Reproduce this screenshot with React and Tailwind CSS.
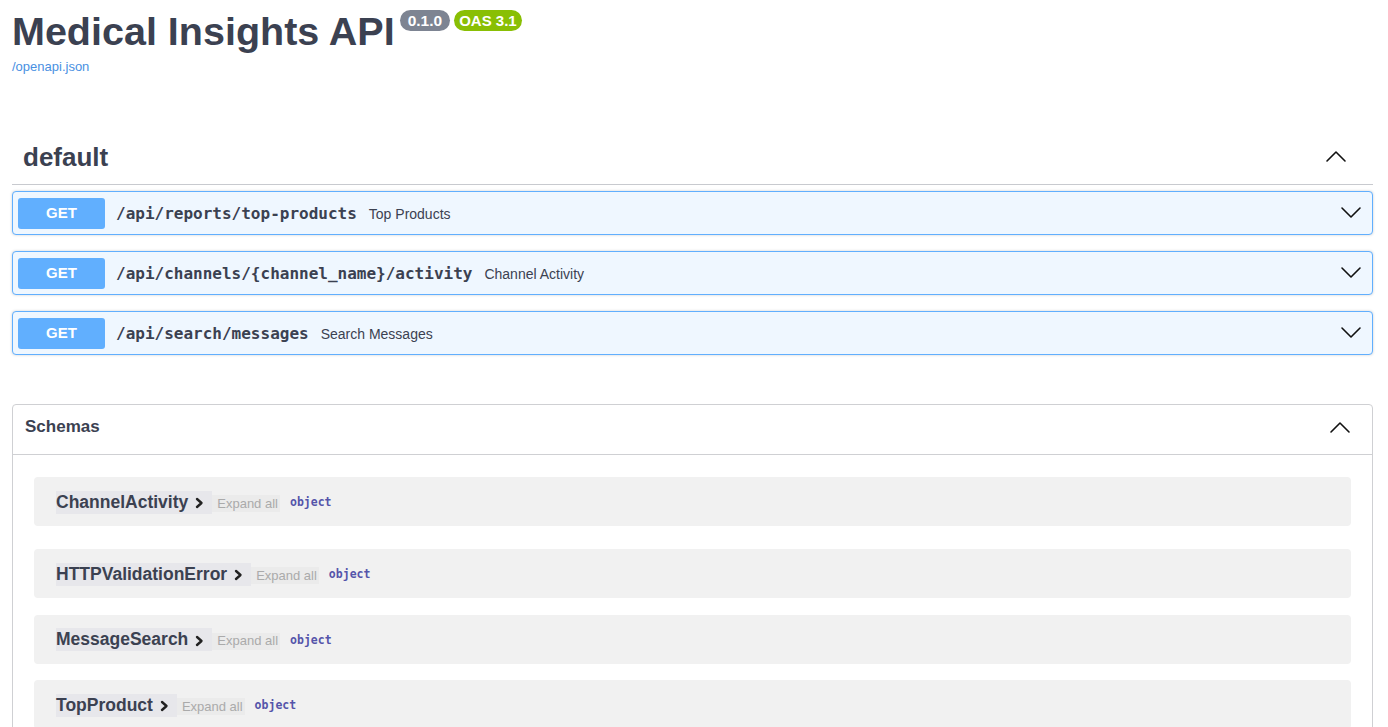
import React from 'react';

const ops = [
  { path: '/api/reports/top-products', summary: 'Top Products' },
  { path: '/api/channels/{channel_name}/activity', summary: 'Channel Activity' },
  { path: '/api/search/messages', summary: 'Search Messages' },
];

const schemas = [
  { name: 'ChannelActivity' },
  { name: 'HTTPValidationError' },
  { name: 'MessageSearch' },
  { name: 'TopProduct' },
];

function ChevronUp() {
  return (
    <svg width="22" height="20" viewBox="0 0 22 20" fill="none">
      <polyline points="2,15 11,6 20,15" stroke="#111" strokeWidth="1.6" strokeLinecap="round" strokeLinejoin="round" />
    </svg>
  );
}

function ChevronDown() {
  return (
    <svg width="22" height="20" viewBox="0 0 22 20" fill="none">
      <polyline points="2,5 11,14 20,5" stroke="#111" strokeWidth="1.6" strokeLinecap="round" strokeLinejoin="round" />
    </svg>
  );
}

function ArrowRight() {
  return (
    <svg width="9" height="12" viewBox="0 0 9 12" fill="none">
      <polyline points="2,2 6.5,6 2,10" stroke="#222" strokeWidth="2.4" strokeLinecap="round" strokeLinejoin="round" />
    </svg>
  );
}

export default function App() {
  return (
    <div className="min-h-screen bg-white pl-[12px] pr-[15px] pt-[9px] font-['Liberation_Sans',Arial,sans-serif] text-[#3b4151]">
      {/* info */}
      <div className="flex items-start">
        <h2 className="text-[39.5px] font-bold leading-[45px]">Medical Insights API</h2>
        <span className="ml-[5px] mt-[1px] rounded-full bg-[#7d8492] px-[8px] text-[15.5px] font-bold leading-[21px] text-white">0.1.0</span>
        <span className="ml-[4px] mt-[1px] rounded-full bg-[#89bf04] px-[5px] text-[15px] font-bold leading-[21px] text-white">OAS 3.1</span>
      </div>
      <div className="mt-[5px] text-[13px] leading-[16px]">
        <a className="text-[#4990e2]">/openapi.json</a>
      </div>

      {/* default tag */}
      <div className="mt-[56px] flex items-center border-b border-[#c8cacf] pb-[12px] pl-[11px] pr-[26px] pt-[11px]">
        <h3 className="flex-1 text-[26px] font-bold leading-[30px]">default</h3>
        <div className="-mt-[3px]"><ChevronUp /></div>
      </div>

      <div className="mt-[6px] flex flex-col gap-[16px]">
        {ops.map((op) => (
          <div
            key={op.path}
            className="flex h-[44px] items-center rounded-[4px] border border-[#61affe] bg-[#eff7ff] pl-[5px] pr-[10px] shadow-[0_0_3px_rgba(0,0,0,0.19)]"
          >
            <span className="flex h-[31px] w-[87px] items-center justify-center rounded-[3px] bg-[#61affe] text-[15px] font-bold text-white">
              GET
            </span>
            <span className="ml-[11px] mt-[2px] font-['DejaVu_Sans_Mono',monospace] text-[16px] font-bold">{op.path}</span>
            <span className="ml-[12px] mt-[2px] flex-1 text-[14px]">{op.summary}</span>
            <ChevronDown />
          </div>
        ))}
      </div>

      {/* schemas */}
      <section className="mt-[49px] rounded-[4px] border border-[#cfd0d3] pb-[20px]">
        <div className="flex h-[50px] items-start border-b border-[#cfd0d3] pl-[12px] pr-[21px] pt-[12px]">
          <h4 className="flex-1 text-[17px] font-bold leading-[20px]">Schemas</h4>
          <ChevronUp />
        </div>
        <div className="px-[21px] pt-[22px]">
          {schemas.map((s, i) => (
            <div
              key={s.name}
              className={`flex h-[49px] items-center rounded-[4px] bg-[#f1f1f1] pl-[22px] ${i === 0 ? 'mb-[23px]' : 'mb-[16.5px]'}`}
            >
              <span className="mt-[1px] flex h-[23px] items-center bg-[#e7e7eb] pr-[8px] text-[17.5px] font-bold leading-[23px]">
                {s.name}
                <span className="ml-[7px] mt-[2px]"><ArrowRight /></span>
              </span>
              <span className="mt-[4px] flex h-[17px] items-center bg-[#ebebeb] pl-[5px] pr-[2px] text-[13px] text-[#aaaaaa]">
                Expand all
              </span>
              <span className="ml-[10px] mt-[3px] font-['DejaVu_Sans_Mono',monospace] text-[11.5px] font-bold text-[#5555aa]">object</span>
            </div>
          ))}
        </div>
      </section>
    </div>
  );
}
